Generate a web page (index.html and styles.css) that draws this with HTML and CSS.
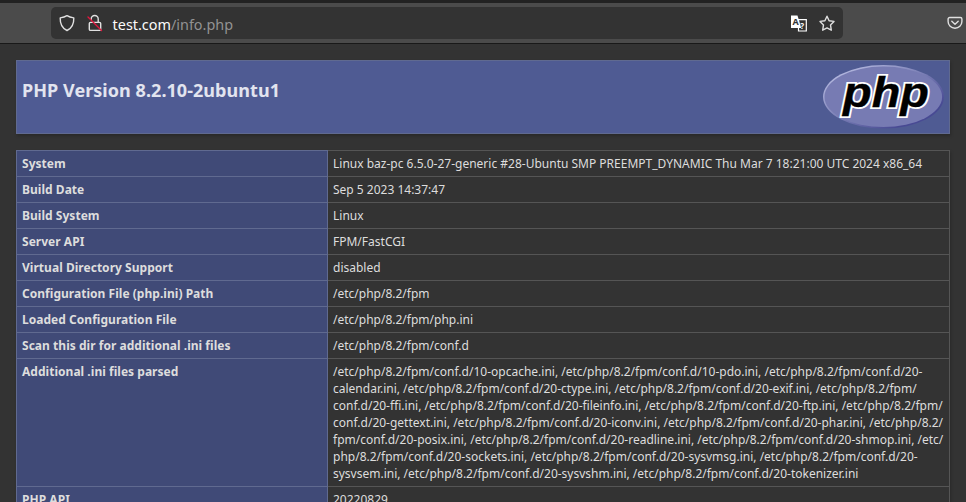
FILE: index.html
```html
<!DOCTYPE html>
<html lang="en">
<head>
<meta charset="utf-8">
<title>PHP 8.2.10-2ubuntu1 - phpinfo()</title>
<link rel="stylesheet" href="styles.css">
</head>
<body>
<header class="toolbar">
  <div class="urlbar">
    <svg class="icon shield" width="16" height="18" viewBox="0 0 16 18"><path d="M8 1.700C6 3 3.600 3.600 1.200 3.900C1 9.500 3 14 8 16.500C13 14 15 9.500 14.800 3.900C12.400 3.600 10 3 8 1.700Z"/></svg>
    <svg class="icon lock" width="16" height="18" viewBox="0 0 16 18"><path d="M4.200 5.400V5a3.500 3.500 0 0 1 7 0V8.400M3.500 8.400h9a1.200 1.200 0 0 1 1.200 1.200v5.600a1.200 1.200 0 0 1-1.200 1.200h-9a1.200 1.200 0 0 1-1.200-1.200V9.600A1.200 1.200 0 0 1 3.500 8.400Z"/><path class="slash" d="M1 3 14.500 16.400"/></svg>
    <span class="url"><b>test.com</b>/info.php</span>
    <svg class="translate" width="16" height="17" viewBox="0 0 16 17"><path class="page" d="M7.500 4.600H15.300V16H7.500Z"/><path class="sheet" d="M0 .5H6.500L10.200 13H0Z"/><text class="letter" x="1.400" y="10">A</text><text class="mark" x="9.300" y="13.500">?</text></svg>
    <svg class="icon star" width="16" height="17" viewBox="0 0 16 17"><path d="M8 1.200 10.100 5.700 15 6.400 11.500 9.900 12.300 15.200 8 12.900 3.700 15.200 4.500 9.900 1 6.400 5.900 5.700Z"/></svg>
  </div>
  <svg class="icon pocket" width="16" height="16" viewBox="0 0 16 16"><path d="M2.700 2.500H13.300a1.600 1.600 0 0 1 1.600 1.600V6.500a6.900 6.700 0 0 1-13.800 0V4.100a1.600 1.600 0 0 1 1.600-1.600ZM4.800 6.200 8 9.200 11.200 6.200"/></svg>
</header>
<main class="page-body">
  <div class="banner">
    <h1>PHP Version 8.2.10-2ubuntu1</h1>
    <svg class="logo" width="121" height="65" viewBox="0 0 121 65" role="img" aria-label="PHP logo">
      <defs><linearGradient id="rim" x1="0" y1="0" x2="1" y2="1"><stop offset=".15" stop-color="#b0b4dc"/><stop offset=".5" stop-color="#777bb3"/><stop offset=".8" stop-color="#484a93"/></linearGradient></defs>
      <ellipse cx="60.500" cy="31.800" rx="60.500" ry="31.800" fill="url(#rim)"/>
      <ellipse cx="60.300" cy="31.800" rx="58.800" ry="30.200" fill="#777bb3"/>
      <text class="wordmark outline" x="20" y="41.500" textLength="86" lengthAdjust="spacingAndGlyphs">php</text>
      <text class="wordmark" x="20" y="41.500" textLength="86" lengthAdjust="spacingAndGlyphs">php</text>
    </svg>
  </div>
  <table class="info">
    <tr><th>System</th><td>Linux baz-pc 6.5.0-27-generic #28-Ubuntu SMP PREEMPT_DYNAMIC Thu Mar 7 18:21:00 UTC 2024 x86_64</td></tr>
    <tr><th>Build Date</th><td>Sep 5 2023 14:37:47</td></tr>
    <tr><th>Build System</th><td>Linux</td></tr>
    <tr><th>Server API</th><td>FPM/FastCGI</td></tr>
    <tr><th>Virtual Directory Support</th><td>disabled</td></tr>
    <tr><th>Configuration File (php.ini) Path</th><td>/etc/php/8.2/fpm</td></tr>
    <tr><th>Loaded Configuration File</th><td>/etc/php/8.2/fpm/php.ini</td></tr>
    <tr><th>Scan this dir for additional .ini files</th><td>/etc/php/8.2/fpm/conf.d</td></tr>
    <tr><th>Additional .ini files parsed</th><td>/etc/php/8.2/fpm/conf.d/10-opcache.ini, /etc/php/8.2/fpm/conf.d/10-pdo.ini, /etc/php/8.2/fpm/conf.d/20-<br>calendar.ini, /etc/php/8.2/fpm/conf.d/20-ctype.ini, /etc/php/8.2/fpm/conf.d/20-exif.ini, /etc/php/8.2/fpm/<br>conf.d/20-ffi.ini, /etc/php/8.2/fpm/conf.d/20-fileinfo.ini, /etc/php/8.2/fpm/conf.d/20-ftp.ini, /etc/php/8.2/fpm/<br>conf.d/20-gettext.ini, /etc/php/8.2/fpm/conf.d/20-iconv.ini, /etc/php/8.2/fpm/conf.d/20-phar.ini, /etc/php/8.2/<br>fpm/conf.d/20-posix.ini, /etc/php/8.2/fpm/conf.d/20-readline.ini, /etc/php/8.2/fpm/conf.d/20-shmop.ini, /etc/<br>php/8.2/fpm/conf.d/20-sockets.ini, /etc/php/8.2/fpm/conf.d/20-sysvmsg.ini, /etc/php/8.2/fpm/conf.d/20-<br>sysvsem.ini, /etc/php/8.2/fpm/conf.d/20-sysvshm.ini, /etc/php/8.2/fpm/conf.d/20-tokenizer.ini</td></tr>
    <tr><th>PHP API</th><td>20220829</td></tr>
  </table>
</main>
</body>
</html>
```
FILE: styles.css
```css
* { box-sizing: border-box; }
html, body { height: 100%; }
body {
  margin: 0;
  overflow: hidden;
  background: #333;
  color: #ddd;
  font-family: "Noto Sans", "Open Sans", sans-serif;
}
.toolbar {
  display: flex;
  align-items: center;
  height: 44px;
  padding: 0 3px 0 51px;
  background: #4b4b4b;
  border-top: 3px solid #222;
  border-bottom: 1px solid #191919;
}
.urlbar {
  display: flex;
  align-items: center;
  width: 792px;
  height: 32px;
  padding: 0 8px;
  background: #333;
  border-radius: 5px;
}
.icon { fill: none; stroke: #e0e0e0; stroke-width: 1.4; stroke-linejoin: round; stroke-linecap: round; }
.lock { margin-left: 12px; }
.slash { stroke: #e2173f; }
.url { margin-left: 9.6px; font-size: 14.4px; line-height: 20px; color: #929292; padding-top: 3px; }
.url b { font-weight: 400; color: #fbfbfb; }
.translate { margin-left: auto; }
.page { fill: #333; stroke: #fff; stroke-width: 1.2; }
.sheet { fill: #fff; }
.letter { font-size: 9px; font-weight: 700; fill: #333; }
.mark { font-size: 8px; font-weight: 700; fill: #fff; }
.star { margin-left: 12px; }
.pocket { margin-left: auto; }
.page-body { width: 934px; margin: 16px auto 0; }
.banner {
  display: flex;
  justify-content: space-between;
  height: 74px;
  padding: 4px 5px;
  background: #4f5b93;
  border: 1px solid #606a90;
  box-shadow: 1px 2px 3px rgba(0, 0, 0, .2);
}
h1 { margin: 13px 0 0; font-size: 18px; line-height: 25px; font-weight: 700; letter-spacing: .05px; color: #e2e4ef; }
.logo { overflow: visible; }
.wordmark {
  font-family: "Liberation Sans", sans-serif;
  font-size: 42px;
  font-weight: 700;
  font-style: italic;
  fill: #000;
  stroke: #000;
  stroke-width: .4;
}
.outline { stroke: #fff; stroke-width: 4; }
.info {
  width: 934px;
  margin-top: 16px;
  table-layout: fixed;
  border-collapse: collapse;
  box-shadow: 1px 2px 3px rgba(0, 0, 0, .2);
  font-size: 12px;
  line-height: 17px;
}
.info th, .info td { padding: 4px 5px; vertical-align: baseline; text-align: left; white-space: nowrap; border: 1px solid #555; }
.info th { width: 311px; background: #404a77; border-color: #606a90; letter-spacing: .03px; }
```
